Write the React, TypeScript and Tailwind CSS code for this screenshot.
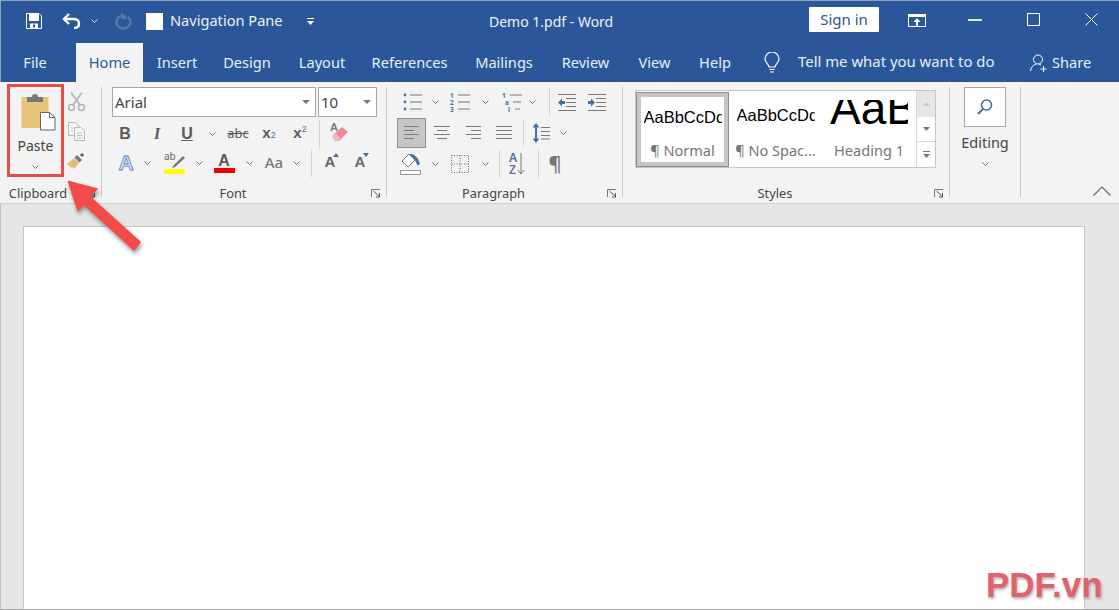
import React from "react";

const GRAY = "#6e6e6e";
const BLUE = "#44719f";

function Chev({ color = GRAY }: { color?: string }) {
  return (
    <svg width="7" height="4" viewBox="0 0 7 4" fill="none">
      <path d="M.5.5 3.5 3.5 6.5.5" stroke={color} strokeWidth="1" />
    </svg>
  );
}
function Cell({ className = "", children }: { className?: string; children?: React.ReactNode }) {
  return <div className={"flex shrink-0 items-center justify-center " + className}>{children}</div>;
}
function RowSep({ className = "" }: { className?: string }) {
  return <div className={"w-px h-[28px] shrink-0 bg-[#d4d4d4] " + className} />;
}
function Launcher() {
  return (
    <svg width="10" height="9" viewBox="0 0 10 9" fill="none" className="absolute right-[5px] top-[8px]">
      <path d="M.5 8V.5H9" stroke="#777" />
      <path d="M2.5 2 8 7.2M8.5 4v4H5" stroke="#555" />
    </svg>
  );
}
function GroupLabel({ children }: { children: React.ReactNode }) {
  return (
    <div className="relative h-[22px] pt-[3px] pr-[22px] flex items-center justify-center text-[12.8px] text-[#444]">
      <span>{children}</span>
      <Launcher />
    </div>
  );
}
function Lines({ w, rows }: { w: number; rows: [number, number][] }) {
  return (
    <svg width={w} height={rows.length * 4} viewBox={`0 0 ${w} ${rows.length * 4}`}>
      {rows.map(([a, b], i) => (
        <rect key={i} x={a} y={i * 4 + 1} width={b - a} height="1" fill="#7a7a7a" />
      ))}
    </svg>
  );
}
function Combo({ className, label }: { className: string; label: string }) {
  return (
    <div className={"h-[30px] bg-white border border-[#a6a6a6] flex items-center justify-between pl-[2px] pr-[5px] text-[15px] text-[#444] " + className}>
      <span className="pt-[1px]">{label}</span>
      <svg width="8" height="4" viewBox="0 0 8 4"><path d="M0 0h8L4 4z" fill="#777" /></svg>
    </div>
  );
}
function Bullets() {
  return (
    <svg width="20" height="20" viewBox="0 0 20 20" fill="none">
      {[3, 10, 17].map((y) => (
        <g key={y}>
          <circle cx="3" cy={y} r="1.4" fill={BLUE} />
          <path d={`M8 ${y}h12`} stroke="#777" />
        </g>
      ))}
    </svg>
  );
}
function Numbers() {
  return (
    <div className="relative flex w-[20px] h-[20px]">
      <div className="w-[7px] flex flex-col text-[6.5px] leading-[7px] font-bold text-[#44719f]">
        <span>1</span>
        <span>2</span>
        <span>3</span>
      </div>
      <svg width="13" height="20" viewBox="0 0 13 20" fill="none">
        {[3, 10, 17].map((y) => <path key={y} d={`M1 ${y}h12`} stroke="#777" />)}
      </svg>
    </div>
  );
}
function Multi() {
  return (
    <div className="flex w-[20px] h-[20px] text-[6.5px] leading-[7px] font-bold text-[#44719f]">
      <div className="flex flex-col w-[8px]">
        <span>1</span>
        <span className="pl-[3px]">a</span>
        <span className="pl-[6px]">i</span>
      </div>
      <svg width="12" height="20" viewBox="0 0 12 20" fill="none">
        <path d="M0 3h12M3 10h8M5 17h5" stroke="#777" />
      </svg>
    </div>
  );
}
function Indent({ dir }: { dir: "l" | "r" }) {
  return (
    <svg width="20" height="17" viewBox="0 0 20 17" fill="none">
      <path d="M1 .5h18M9 4.500h10M9 8.500h10M9 12.500h10M1 16.500h18" stroke="#777" />
      {dir === "l" ? (
        <path d="M1 8.500 5 4.500v2.500h3v3H5v2.500z" fill={BLUE} />
      ) : (
        <path d="M8 8.500 4 4.500v2.500H1v3h3v2.500z" fill={BLUE} />
      )}
    </svg>
  );
}
function LineSpacing() {
  return (
    <svg width="18" height="20" viewBox="0 0 18 20" fill="none">
      <path d="M4 0 .5 4.500H3v11H.5L4 20l3.500-4.500H5v-11h2.500z" fill={BLUE} />
      <path d="M9 4.500h9M9 8.500h9M9 12.500h9M9 16h9" stroke="#777" />
    </svg>
  );
}
function Fill() {
  return (
    <svg width="22" height="22" viewBox="0 0 22 22" fill="none">
      <path d="M9 1 2 8l6 6 7-7z" fill="#fff" stroke="#777" />
      <path d="M9 1c3-.5 7 1.500 9 5l2 5-2.500 1.500L15 7z" fill="#44719f" />
      <rect x=".5" y="17.500" width="20" height="4" fill="#fff" stroke="#999" />
    </svg>
  );
}
function Borders() {
  return (
    <svg width="18" height="18" viewBox="0 0 18 18" fill="none">
      <path d="M.5.500h17v17H.500zM9 .500v17M.500 9h17" stroke="#666" strokeDasharray="1 1.500" />
    </svg>
  );
}
function Sort() {
  return (
    <div className="flex items-center h-[24px]">
      <div className="flex flex-col text-[12px] leading-[12px] font-semibold">
        <span className="text-[#44719f]">A</span>
        <span className="text-[#8a5aa0]">Z</span>
      </div>
      <svg width="8" height="24" viewBox="0 0 8 24" fill="none">
        <path d="M4 1v21M1 18l3 4 3-4" stroke="#777" />
      </svg>
    </div>
  );
}
function Highlight() {
  return (
    <div className="relative w-[22px] h-[22px]">
      <span className="absolute left-0 -top-[2px] text-[10px] leading-[12px] text-[#666]">ab</span>
      <svg width="22" height="22" viewBox="0 0 22 22" className="absolute inset-0" fill="none">
        <path d="M9 14 19 4l2 2-10 9-3 1z" fill="#777" />
        <rect y="17" width="21" height="5" fill="#ffff00" />
      </svg>
    </div>
  );
}

export default function App() {
  return (
    <div className="relative w-[1119px] h-[610px] overflow-hidden flex flex-col bg-[#e6e6e6] border-b border-[#a8a8a8] font-['Noto_Sans','Open_Sans',sans-serif]">
      {/* title bar */}
      <div className="h-[43px] shrink-0 flex items-center pb-[2px] bg-[#2b579a] border-t border-[#8fa3c0] shadow-[inset_1px_0_0_#8fa3c0] text-[14.6px] text-[#eef2f8]">
        <Cell className="ml-[25px] w-[18px]">
          <svg width="16" height="16" viewBox="0 0 16 16" fill="none">
            <path d="M.5.500h12.500L15.500 3v12.500H.500z" fill="#2b579a" stroke="#fff" />
            <rect x="3" y="1" width="10" height="7" fill="#fff" />
            <path d="M4 15v-4.500h8V15" fill="#fff" />
            <rect x="7" y="11.500" width="2" height="3" fill="#2b579a" />
          </svg>
        </Cell>
        <Cell className="ml-[18px] w-[20px]">
          <svg width="19" height="16" viewBox="0 0 19 16" fill="none">
            <path d="M7 1 2 6l5 5" stroke="#fff" strokeWidth="2.400" />
            <path d="M3 6h8c4 0 6 2 6 4.500S15.500 15 12 15" stroke="#fff" strokeWidth="2.400" />
          </svg>
        </Cell>
        <Cell className="ml-[9px] w-[8px]"><Chev color="#dfe7f3" /></Cell>
        <Cell className="ml-[16px] w-[18px]">
          <svg width="17" height="17" viewBox="0 0 17 17" fill="none">
            <path d="M11 3.500C6 1.500 1.500 4.500 1.500 9s3.500 6.500 7 6.500 7-3 7-6.500c0-2-1-4-2.500-5" stroke="#56789f" strokeWidth="2.400" />
            <path d="M7 0v5h5" stroke="#56789f" strokeWidth="1.800" />
          </svg>
        </Cell>
        <div className="ml-[14px] w-[17px] h-[17px] shrink-0 bg-white" />
        <div className="ml-[7px] w-[113px] whitespace-nowrap">Navigation Pane</div>
        <Cell className="ml-[22px] w-[10px]">
          <svg width="7" height="7" viewBox="0 0 7 7"><path d="M0 0h7v1H0zM0 3h7L3.500 7z" fill="#fff" /></svg>
        </Cell>
        <div className="ml-[174px] w-[123px] whitespace-nowrap text-center text-[14px]">Demo 1.pdf  -  Word</div>
        <div className="ml-[197px] w-[70px] h-[25px] -mt-[3px] shrink-0 bg-white text-[#2b579a] text-[15px] flex items-center justify-center rounded-[1px]">Sign in</div>
        <Cell className="ml-[29px] w-[18px]">
          <svg width="18" height="13" viewBox="0 0 18 13" fill="none" className="-mt-[2px]">
            <rect x=".5" y=".5" width="17" height="12" stroke="#fff" />
            <rect y="0" width="18" height="3" fill="#fff" />
            <path d="M9 4 5.500 8H8v4h2V8h2.500z" fill="#fff" />
          </svg>
        </Cell>
        <Cell className="ml-[42px] w-[14px]"><div className="w-[14px] h-[2px] bg-[#dfe7f3] -mt-[3px]" /></Cell>
        <Cell className="ml-[45px] w-[13px]"><div className="w-[13px] h-[13px] border border-white -mt-[3px]" /></Cell>
        <Cell className="ml-[45px] w-[13px]">
          <svg width="13" height="13" viewBox="0 0 13 13" className="-mt-[3px]"><path d="M.5.500l12 12M12.500.500l-12 12" stroke="#fff" /></svg>
        </Cell>
      </div>

      {/* tabs */}
      <div className="h-[39px] shrink-0 flex items-center bg-[#2b579a] text-[14.6px] text-[#e8eef7] shadow-[inset_1px_0_0_#8fa3c0]">
        <Cell className="w-[70px]">File</Cell>
        <Cell className="ml-[6px] w-[67px] h-full bg-[#f3f3f3] text-[#2b579a]">Home</Cell>
        <Cell className="w-[68px]">Insert</Cell>
        <Cell className="w-[72px]">Design</Cell>
        <Cell className="w-[78px]">Layout</Cell>
        <Cell className="w-[97px]">References</Cell>
        <Cell className="w-[92px]">Mailings</Cell>
        <Cell className="w-[71px]">Review</Cell>
        <Cell className="w-[67px]">View</Cell>
        <Cell className="w-[54px]">Help</Cell>
        <Cell className="ml-[18px] w-[24px]">
          <svg width="16" height="22" viewBox="0 0 16 22" fill="none">
            <path d="M5 15c0-3-4-4-4-8a7 7 0 0 1 14 0c0 4-4 5-4 8z" stroke="#fff" strokeWidth="1.200" />
            <path d="M5.500 17.500h5M6 20h4" stroke="#fff" strokeWidth="1.200" />
          </svg>
        </Cell>
        <div className="ml-[14px] w-[197px] whitespace-nowrap -mt-[2px] text-[14.9px]">Tell me what you want to do</div>
        <Cell className="ml-[35px] w-[18px]">
          <svg width="18" height="18" viewBox="0 0 18 18" fill="none">
            <circle cx="8" cy="5.500" r="4.500" stroke="#fff" />
            <path d="M.5 17c.5-4 3-6.500 6-7M9 10.500l2 .5M13.500 12v6M10.500 15h6" stroke="#fff" />
          </svg>
        </Cell>
        <div className="ml-[4px] whitespace-nowrap">Share</div>
      </div>

      {/* ribbon */}
      <div className="h-[122px] shrink-0 flex bg-[#f3f3f3] border-b border-[#d2d2d2] text-[#444]">
        {/* clipboard */}
        <div className="w-[101px] shrink-0 flex flex-col">
          <div className="flex-1 flex min-h-0">
            <div className="ml-[7px] mt-[2px] w-[57px] h-[93px] shrink-0 border-[3px] border-[#e94b4b] flex flex-col items-center text-[#444]">
              <svg width="40" height="38" viewBox="0 0 40 38" className="mt-[6px] shrink-0" fill="none">
                <rect x="5.500" y="4" width="27" height="31" fill="#e6c27a" />
                <path d="M11 9V4h5a3 3 0 0 1 6 0h5v5z" fill="#777" />
                <path d="M24.500 19.500h9l5.500 5v12.500H24.500z" fill="#fff" stroke="#666" />
                <path d="M33.500 19.500v5h5.500" stroke="#666" />
              </svg>
              <div className="text-[14px] leading-[20px] mt-[5px]">Paste</div>
              <div className="mt-[9px] leading-none"><Chev /></div>
            </div>
            <div className="w-[24px] flex flex-col items-center pt-[10px]">
              <svg width="17" height="20" viewBox="0 0 17 20" fill="none">
                <path d="M3 .5 12 13M14 .5 5 13" stroke="#bcbcbc" strokeWidth="2" />
                <circle cx="3.500" cy="15.500" r="3" stroke="#b0b0b0" strokeWidth="1.500" />
                <circle cx="13.500" cy="15.500" r="3" stroke="#b0b0b0" strokeWidth="1.500" />
              </svg>
              <svg width="17" height="19" viewBox="0 0 17 19" className="mt-[10px]" fill="#f6f6f6">
                <path d="M.5.500h7l3 3v10H.500z" stroke="#b8b8b8" />
                <path d="M6.500 5.500h6.500l3.500 3.500v9.500h-10z" stroke="#b8b8b8" />
                <path d="M9 11h5M9 13.500h5M9 16h5M3 6h2M3 9h2" stroke="#c0c0c0" />
              </svg>
              <svg width="18" height="17" viewBox="0 0 18 17" className="mt-[12px]">
                <path d="M0 11 7 5l5 5-5 6-2-2-1 1-1-2-1 0z" fill="#e3bd78" />
                <path d="M7.500 4.500 10 2l5 5-2.500 2.500z" fill="#777" />
                <path d="M13 2l2-2 2 2-2 2z" fill="#555" />
              </svg>
            </div>
          </div>
          <GroupLabel>
            <span className="-ml-[3px] block">Clipboard</span>
          </GroupLabel>
        </div>
        <div className="w-px h-[110px] mt-[5px] shrink-0 bg-[#c6c6c6]" />

        {/* font */}
        <div className="w-[284px] shrink-0 flex flex-col">
          <div className="flex-1 flex flex-col pt-[5px]">
            <div className="flex ml-[10px]">
              <Combo className="w-[204px]" label="Arial" />
              <Combo className="ml-[2px] w-[59px]" label="10" />
            </div>
            <div className="flex items-center ml-[8px] mt-[2px] h-[29px] text-[#5a5a5a]">
              <Cell className="w-[30px] font-['Liberation_Sans',sans-serif] font-bold text-[16px]">B</Cell>
              <Cell className="w-[34px] font-['Liberation_Serif',serif] italic font-bold text-[16px]">I</Cell>
              <Cell className="w-[26px] font-['Liberation_Sans',sans-serif] font-bold text-[16px] underline">U</Cell>
              <Cell className="w-[24px]"><Chev /></Cell>
              <Cell className="w-[28px] text-[13px] line-through">abc</Cell>
              <Cell className="w-[34px] font-['Liberation_Sans',sans-serif] font-bold text-[15px]">x<sub className="text-[9px] font-normal text-[#44719f] leading-none">2</sub></Cell>
              <Cell className="w-[28px] font-['Liberation_Sans',sans-serif] font-bold text-[15px]">x<sup className="text-[9px] font-normal text-[#44719f] leading-none">2</sup></Cell>
              <RowSep className="ml-[5px] mr-[4px]" />
              <Cell className="w-[32px] -mt-[3px]">
                <svg width="20" height="20" viewBox="0 0 20 20">
                  <text x="0" y="9" fontSize="11" fontWeight="700" fill="#777" fontFamily="Liberation Sans">A</text>
                  <path d="M2 14 12 5l6 5-9 9H5z" fill="#ea8a96" />
                  <path d="M2 14l3-3 6 5-3 3H5z" fill="#f2b8c0" />
                </svg>
              </Cell>
            </div>
            <div className="flex items-center ml-[8px] h-[29px] text-[#5a5a5a]">
              <Cell className="w-[32px] font-['Liberation_Sans',sans-serif] font-bold text-[21px] text-[#d6e5f5] [-webkit-text-stroke:0.8px_#4a82c2]">A</Cell>
              <Cell className="w-[10px]"><Chev /></Cell>
              <Cell className="ml-[6px] w-[34px]"><Highlight /></Cell>
              <Cell className="ml-[2px] w-[10px]"><Chev /></Cell>
              <Cell className="w-[40px]">
                <div className="flex flex-col items-center w-[21px] font-['Liberation_Sans',sans-serif] font-bold text-[16px] leading-[15px]">
                  <span>A</span>
                  <div className="w-[21px] h-[5px] bg-[#ee0000]" />
                </div>
              </Cell>
              <Cell className="w-[10px]"><Chev /></Cell>
              <Cell className="ml-[3px] w-[34px] text-[15px] text-[#777] font-medium">Aa</Cell>
              <Cell className="w-[10px]"><Chev /></Cell>
              <RowSep className="ml-[10px]" />
              <Cell className="w-[40px]">
                <div className="relative font-['Liberation_Sans',sans-serif] font-bold text-[15px] text-[#666] pr-[4px]">
                  A
                  <svg width="6" height="4" viewBox="0 0 6 4" className="absolute right-0 top-[2px]"><path d="M0 4 3 0l3 4z" fill={BLUE} /></svg>
                </div>
              </Cell>
              <Cell className="w-[20px]">
                <div className="relative font-['Liberation_Sans',sans-serif] font-bold text-[15px] text-[#666] pr-[4px]">
                  A
                  <svg width="6" height="4" viewBox="0 0 6 4" className="absolute right-0 top-[2px]"><path d="M0 0h6L3 4z" fill={BLUE} /></svg>
                </div>
              </Cell>
            </div>
          </div>
          <GroupLabel>Font</GroupLabel>
        </div>
        <div className="w-px h-[110px] mt-[5px] shrink-0 bg-[#c6c6c6]" />

        {/* paragraph */}
        <div className="w-[235px] shrink-0 flex flex-col">
          <div className="flex-1 flex flex-col pt-[6px]">
            <div className="flex items-center h-[28px]">
              <Cell className="ml-[11px] w-[28px]"><Bullets /></Cell>
              <Cell className="ml-[4px] w-[10px]"><Chev /></Cell>
              <Cell className="ml-[6px] w-[28px]"><Numbers /></Cell>
              <Cell className="ml-[6px] w-[10px]"><Chev /></Cell>
              <Cell className="ml-[8px] w-[28px]"><Multi /></Cell>
              <Cell className="ml-[1px] w-[10px]"><Chev /></Cell>
              <RowSep className="ml-[12px]" />
              <Cell className="ml-[3px] w-[28px]"><Indent dir="l" /></Cell>
              <Cell className="ml-[2px] w-[28px]"><Indent dir="r" /></Cell>
            </div>
            <div className="flex items-center h-[30px] mt-[2px]">
              <Cell className="ml-[10px] w-[29px] h-[30px] bg-[#c6c6c6] border border-[#8f8f8f]">
                <Lines w={15} rows={[[0, 15], [0, 10], [0, 15], [0, 10]]} />
              </Cell>
              <Cell className="ml-[2px] w-[28px]"><Lines w={16} rows={[[0, 16], [3, 13], [0, 16], [3, 13]]} /></Cell>
              <Cell className="ml-[3px] w-[28px]"><Lines w={15} rows={[[0, 15], [5, 15], [0, 15], [5, 15]]} /></Cell>
              <Cell className="ml-[3px] w-[28px]"><Lines w={16} rows={[[0, 16], [0, 16], [0, 16], [0, 16]]} /></Cell>
              <RowSep className="ml-[5px]" />
              <Cell className="ml-[3px] w-[28px]"><LineSpacing /></Cell>
              <Cell className="ml-[3px] w-[10px]"><Chev /></Cell>
            </div>
            <div className="flex items-center h-[29px] mt-[1px]">
              <Cell className="ml-[10px] w-[28px]"><Fill /></Cell>
              <Cell className="ml-[5px] w-[10px]"><Chev /></Cell>
              <Cell className="ml-[6px] w-[28px]"><Borders /></Cell>
              <Cell className="ml-[6px] w-[10px]"><Chev /></Cell>
              <RowSep className="ml-[9px]" />
              <Cell className="ml-[3px] w-[28px]"><Sort /></Cell>
              <RowSep className="ml-[7px]" />
              <Cell className="ml-[2px] w-[28px] text-[20px] leading-[24px] font-semibold text-[#777]">¶</Cell>
            </div>
          </div>
          <GroupLabel>Paragraph</GroupLabel>
        </div>
        <div className="w-px h-[110px] mt-[5px] shrink-0 bg-[#c6c6c6]" />

        {/* styles */}
        <div className="w-[326px] shrink-0 flex flex-col">
          <div className="flex-1 pt-[8px] pl-[12px]">
            <div className="w-[301px] h-[78px] flex bg-white border border-[#c6c6c6]">
              <div className="w-[93px] h-[75px] mt-[1px] shrink-0 border border-[#8c8c8c]">
                <div className="w-full h-full border-[4px] border-[#c6c6c6] flex flex-col items-center overflow-hidden">
                  <div className="w-[78px] overflow-hidden whitespace-nowrap text-[16.5px] leading-[18px] mt-[11px] text-black font-['Liberation_Sans',sans-serif]">AaBbCcDd</div>
                  <div className="mt-[15px] text-[14.5px] leading-[18px] text-[#767676]">¶ Normal</div>
                </div>
              </div>
              <div className="w-[93px] shrink-0 flex flex-col items-center">
                <div className="w-[78px] overflow-hidden whitespace-nowrap text-[16.5px] leading-[18px] mt-[15px] text-black font-['Liberation_Sans',sans-serif]">AaBbCcDd</div>
                <div className="mt-[17px] text-[14.5px] leading-[18px] text-[#767676] whitespace-nowrap">¶ No Spac...</div>
              </div>
              <div className="w-[94px] shrink-0 flex flex-col items-center">
                <div className="w-[78px] h-[28px] mt-[9px] overflow-hidden whitespace-nowrap flex items-end text-[46px] leading-[39px] text-black font-['Liberation_Sans',sans-serif]">AaBb</div>
                <div className="mt-[13px] text-[14.6px] leading-[18px] text-[#767676] whitespace-nowrap">Heading 1</div>
              </div>
              <div className="flex-1 flex flex-col border-l border-[#d8d8d8]">
                <Cell className="h-[26px] bg-[#e6e6e6]">
                  <svg width="7" height="4" viewBox="0 0 7 4"><path d="M0 4 3.500 0 7 4z" fill="#c8c8c8" /></svg>
                </Cell>
                <Cell className="h-[25px] border-b border-[#d8d8d8]">
                  <svg width="7" height="4" viewBox="0 0 7 4"><path d="M0 0h7L3.500 4z" fill="#777" /></svg>
                </Cell>
                <Cell className="flex-1">
                  <svg width="7" height="7" viewBox="0 0 7 7"><path d="M0 0h7v1H0zM0 3h7L3.500 7z" fill="#777" /></svg>
                </Cell>
              </div>
            </div>
          </div>
          <GroupLabel>Styles</GroupLabel>
        </div>
        <div className="w-px h-[110px] mt-[5px] shrink-0 bg-[#c6c6c6]" />

        {/* editing */}
        <div className="w-[70px] shrink-0 flex flex-col items-center pt-[5px]">
          <Cell className="w-[42px] h-[40px] bg-white border border-[#a6a6a6]">
            <svg width="18" height="18" viewBox="0 0 18 18" fill="none">
              <circle cx="10.500" cy="7" r="5" stroke="#44719f" strokeWidth="1.600" />
              <path d="M7 11 2 16" stroke="#44719f" strokeWidth="2.200" />
            </svg>
          </Cell>
          <div className="mt-[4px] text-[14.5px] leading-[22px]">Editing</div>
          <div className="mt-[9px] leading-none"><Chev /></div>
        </div>
        <div className="w-px h-[110px] mt-[5px] shrink-0 bg-[#c6c6c6]" />
        <div className="flex-1 flex justify-end items-end pr-[8px] pb-[7px]">
          <svg width="18" height="10" viewBox="0 0 18 10" fill="none"><path d="M.5 9.500 9 1l8.500 8.500" stroke="#666" strokeWidth="1.200" /></svg>
        </div>
      </div>

      {/* document */}
      <div className="flex-1 flex pt-[22px] pl-[23px] shadow-[inset_1px_0_0_#c0c0c0]">
        <div className="w-[1062px] bg-white border border-b-0 border-[#c6c6c6]" />
      </div>

      {/* annotation arrow */}
      <svg width="90" height="80" viewBox="0 0 90 80" fill="none" className="absolute left-[60px] top-[175px] drop-shadow-[1px_3px_2px_rgba(0,0,0,0.4)]">
        <path
          d="M8.500 6.500 37 14l-7.500 7.500L80 67l-6 8-50-46-6 6.500z"
          fill="#f44a4a"
          stroke="#f44a4a"
          strokeLinejoin="round"
          strokeWidth="1.500"
        />
      </svg>
      {/* watermark */}
      <div className="absolute left-[986px] top-[565px] font-['Liberation_Sans',sans-serif] font-bold text-[35px] leading-[40px] text-[#e0626e] [text-shadow:1px_2px_3px_rgba(0,0,0,0.3)]">PDF.vn</div>
    </div>
  );
}
